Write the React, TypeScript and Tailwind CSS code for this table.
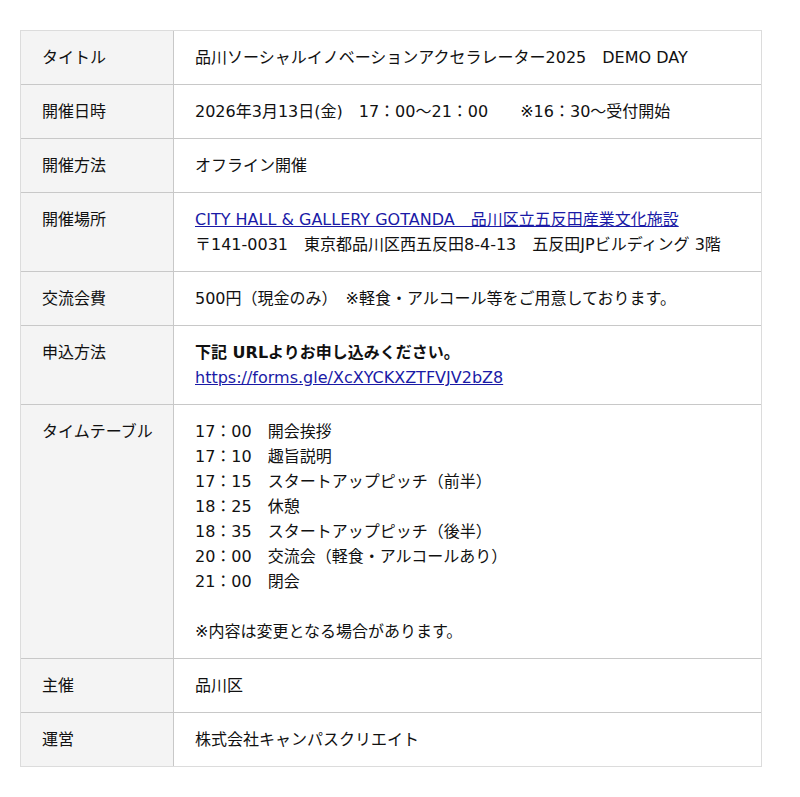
import React from "react";

const rows: { label: string; content: React.ReactNode }[] = [
  { label: "タイトル", content: <p>品川ソーシャルイノベーションアクセラレーター2025　DEMO DAY</p> },
  { label: "開催日時", content: <p>2026年3月13日(金)　17：00〜21：00　　※16：30〜受付開始</p> },
  { label: "開催方法", content: <p>オフライン開催</p> },
  {
    label: "開催場所",
    content: (
      <>
        <p>
          <a href="#" className="text-[#1a1aa6] underline">CITY HALL &amp; GALLERY GOTANDA　品川区立五反田産業文化施設</a>
        </p>
        <p>〒141-0031　東京都品川区西五反田8-4-13　五反田JPビルディング 3階</p>
      </>
    ),
  },
  { label: "交流会費", content: <p>500円（現金のみ）　※軽食・アルコール等をご用意しております。</p> },
  {
    label: "申込方法",
    content: (
      <>
        <p className="font-bold">下記 URLよりお申し込みください。</p>
        <p>
          <a href="#" className="text-[#1a1aa6] underline">https://forms.gle/XcXYCKXZTFVJV2bZ8</a>
        </p>
      </>
    ),
  },
  {
    label: "タイムテーブル",
    content: (
      <>
        <p>17：00　開会挨拶</p>
        <p>17：10　趣旨説明</p>
        <p>17：15　スタートアップピッチ（前半）</p>
        <p>18：25　休憩</p>
        <p>18：35　スタートアップピッチ（後半）</p>
        <p>20：00　交流会（軽食・アルコールあり）</p>
        <p>21：00　閉会</p>
        <p>&nbsp;</p>
        <p>※内容は変更となる場合があります。</p>
      </>
    ),
  },
  { label: "主催", content: <p>品川区</p> },
  { label: "運営", content: <p>株式会社キャンパスクリエイト</p> },
];

export default function App() {
  return (
    <div
      className="bg-white min-h-[797px] pt-[30px] pl-[20px] text-[16px] leading-[25px] text-[#111]"
      style={{ fontFamily: '"DejaVu Sans", "Noto Sans CJK JP", sans-serif' }}
    >
      <div className="w-[742px] border border-[#dcdcdc]">
        {rows.map((r, i) => (
          <div key={i} className={`flex ${i > 0 ? "border-t border-[#c8c8c8]" : ""}`}>
            <div className="w-[153px] shrink-0 bg-[#f4f4f4] border-r border-[#c8c8c8] pl-[21px] pr-2 py-[14px]">
              {r.label}
            </div>
            <div className="flex-1 pl-[21px] pr-2 py-[14px]">{r.content}</div>
          </div>
        ))}
      </div>
    </div>
  );
}
